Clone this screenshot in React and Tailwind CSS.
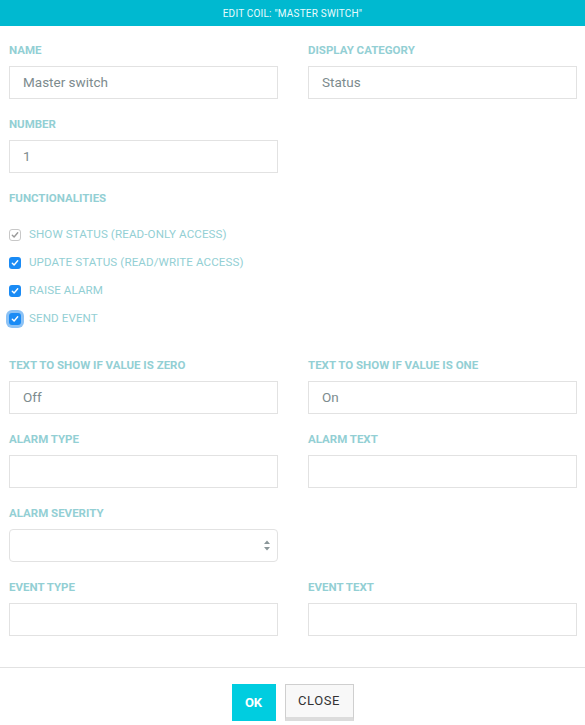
import React from "react";

const Label = ({ children }) => (
  <div className="h-[14px] mb-[9px] text-[11.5px] leading-[14px] font-bold text-[#93cfd4] uppercase">
    {children}
  </div>
);

const Field = ({ label, value }) => (
  <div className="mb-[18px]">
    <Label>{label}</Label>
    <div className="h-[33px] border border-[#e2e2e2] px-[13px] flex items-center text-[13.5px] text-[#7d8b8e]">
      {value}
    </div>
  </div>
);

const Check = ({ label, disabled, focus }) => (
  <div className="h-[28px] flex items-center">
    <span
      className={
        "w-[12px] h-[12px] rounded-[3px] flex items-center justify-center " +
        (disabled
          ? "border border-[#c8c8c8] bg-white"
          : "bg-[#1a8bf5]") +
        (focus ? " ring-[3px] ring-[#8cc2f5]" : "")
      }
    >
      <svg width="8" height="8" viewBox="0 0 8 8">
        <path
          d="M1.3 4.2 L3.1 6 L6.7 1.8"
          fill="none"
          stroke={disabled ? "#9a9a9a" : "#fff"}
          strokeWidth="1.4"
          strokeLinecap="round"
          strokeLinejoin="round"
        />
      </svg>
    </span>
    <span className="ml-[8px] text-[11.6px] text-[#93cfd4] tracking-[0.1px]">{label}</span>
  </div>
);

export default function App() {
  return (
    <div className="w-[585px] h-[725px] bg-white font-['Roboto',sans-serif]">
      <div className="h-[26px] bg-[#00b9d0] flex items-center justify-center text-[10px] text-[#e8fbfd] tracking-[0.2px]">
        EDIT COIL: "MASTER SWITCH"
      </div>
      <div className="px-[9px] pt-[17px]">
        <div className="grid grid-cols-2 gap-x-[30px] w-[568px]">
          <Field label="Name" value="Master switch" />
          <Field label="Display category" value="Status" />
          <Field label="Number" value="1" />
          <div />
        </div>
        <Label>Functionalities</Label>
        <div className="mt-[16px] mb-[25px]">
          <Check label="SHOW STATUS (READ-ONLY ACCESS)" disabled />
          <Check label="UPDATE STATUS (READ/WRITE ACCESS)" />
          <Check label="RAISE ALARM" />
          <Check label="SEND EVENT" focus />
        </div>
        <div className="grid grid-cols-2 gap-x-[30px] w-[568px]">
          <Field label="Text to show if value is zero" value="Off" />
          <Field label="Text to show if value is one" value="On" />
          <Field label="Alarm type" value="" />
          <Field label="Alarm text" value="" />
          <div className="mb-[18px]">
            <Label>Alarm severity</Label>
            <div className="h-[33px] border border-[#e2e2e2] rounded-[4px] flex items-center justify-end pr-[6px]">
              <svg width="8" height="11" viewBox="0 0 8 11">
                <path d="M4 0.5 L7 4 L1 4 Z" fill="#8a9699" />
                <path d="M4 10.5 L7 7 L1 7 Z" fill="#8a9699" />
              </svg>
            </div>
          </div>
          <div />
          <Field label="Event type" value="" />
          <Field label="Event text" value="" />
        </div>
      </div>
      <div className="mt-[13px] border-t border-[#e2e2e2] pt-[16px] flex justify-center gap-[9px]">
        <button className="w-[44px] h-[37px] bg-[#00cde0] text-white text-[13px] font-bold">
          OK
        </button>
        <button className="w-[69px] h-[37px] bg-[#f8f8f8] border border-[#cfcfcf] border-b-[4px] border-b-[#dcdcdc] text-[#333] text-[13px] tracking-[0.6px]">
          CLOSE
        </button>
      </div>
    </div>
  );
}
